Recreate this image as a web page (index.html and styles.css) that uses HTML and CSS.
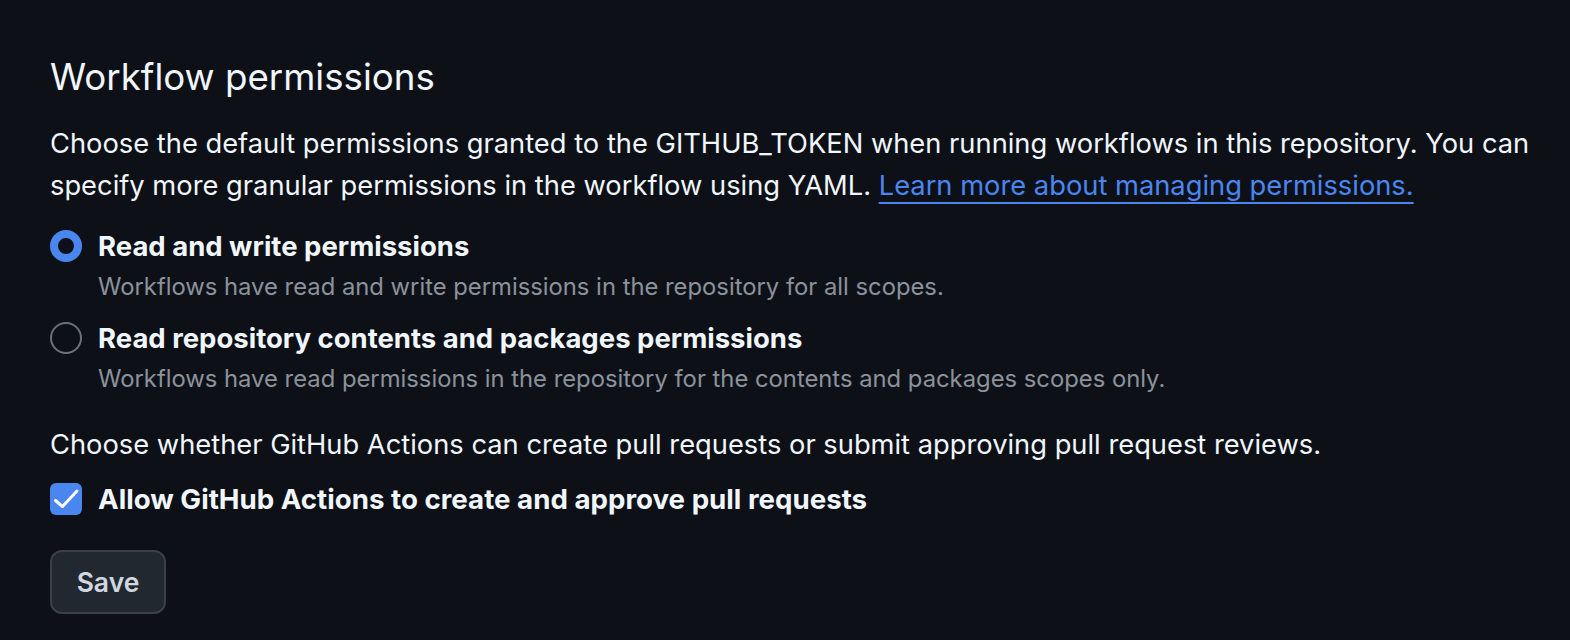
FILE: index.html
```html
<!DOCTYPE html>
<html lang="en">
<head>
    <meta charset="UTF-8">
    <meta name="viewport" content="width=device-width, initial-scale=1.0">
    <title>Actions settings</title>
    <link rel="stylesheet" href="styles.css">
</head>
<body>
    <div class="settings">
        <h2 class="title">Workflow permissions</h2>
        <p class="intro">
            Choose the default permissions granted to the GITHUB_TOKEN when running workflows in this repository. You can<br>
            specify more granular permissions in the workflow using YAML. <a href="#" class="link">Learn more about managing permissions.</a>
        </p>

        <div class="options">
            <label class="option">
                <span class="radio checked"></span>
                <span class="option-label">Read and write permissions</span>
                <span class="option-note">Workflows have read and write permissions in the repository for all scopes.</span>
            </label>
            <label class="option">
                <span class="radio"></span>
                <span class="option-label">Read repository contents and packages permissions</span>
                <span class="option-note">Workflows have read permissions in the repository for the contents and packages scopes only.</span>
            </label>
        </div>

        <p class="intro pr-text">Choose whether GitHub Actions can create pull requests or submit approving pull request reviews.</p>

        <label class="check-row">
            <span class="checkbox">
                <svg width="32" height="32" viewBox="0 0 32 32"><path d="M5.5 17.5 L12.5 23.5 L27 8" fill="none" stroke="#fff" stroke-width="3" stroke-linecap="round" stroke-linejoin="round"/></svg>
            </span>
            <span class="option-label label-wide">Allow GitHub Actions to create and approve pull requests</span>
        </label>

        <button type="button" class="btn">Save</button>
    </div>
</body>
</html>
```

FILE: styles.css
```css
body {
    margin: 0;
    padding: 0;
    background-color: #0d1117;
    color: #f0f6fc;
    font-family: Inter, "Noto Sans", sans-serif;
}
.settings {
    padding: 52px 50px 0 50px;
}
.title {
    margin: 0;
    font-size: 36.7px;
    font-weight: 400;
    line-height: 50px;
}
.intro {
    margin: 21px 0 0 0;
    font-size: 27.3px;
    line-height: 42px;
    white-space: nowrap;
}
.link {
    color: #4a86f0;
    text-decoration: underline;
    text-decoration-thickness: 2px;
    text-underline-offset: 7px;
}
.options {
    display: flex;
    flex-direction: column;
    gap: 18px;
    margin-top: 21px;
}
.option {
    display: grid;
    grid-template-columns: 32px 1fr;
    column-gap: 16px;
    align-items: center;
}
.radio {
    box-sizing: border-box;
    width: 32px;
    height: 32px;
    border-radius: 50%;
    border: 2px solid #6b717a;
}
.radio.checked {
    border: 8px solid #4a86f0;
}
.option-label {
    font-size: 27.5px;
    font-weight: 700;
    line-height: 36px;
}
.label-wide {
    font-size: 27.7px;
}
.option-note {
    grid-column: 2;
    margin-top: 8px;
    font-size: 23.8px;
    line-height: 30px;
    color: #8b929b;
}
.pr-text {
    margin-top: 30px;
}
.check-row {
    display: flex;
    align-items: center;
    gap: 16px;
    margin-top: 15px;
}
.checkbox {
    width: 32px;
    height: 32px;
    border-radius: 6px;
    background: #4a86f0;
    display: flex;
    align-items: center;
    justify-content: center;
}
.btn {
    display: block;
    margin-top: 33px;
    box-sizing: border-box;
    width: 116px;
    height: 64px;
    background: #212830;
    border: 2px solid #3a4049;
    border-radius: 12px;
    color: #d1d7e0;
    font-family: Inter, "Noto Sans", sans-serif;
    font-size: 26.5px;
    font-weight: 600;
    cursor: pointer;
}
```
